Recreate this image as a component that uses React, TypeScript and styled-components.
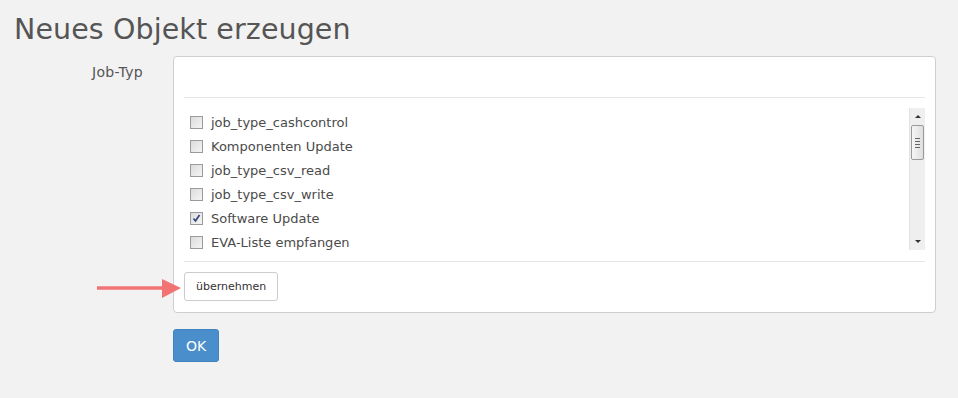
import React from 'react';
import styled, { createGlobalStyle } from 'styled-components';

const GlobalStyle = createGlobalStyle`
  html, body {
    margin: 0;
    padding: 0;
    background: #f2f2f2;
    font-family: "DejaVu Sans", Verdana, sans-serif;
    color: #555;
  }
`;

const Page = styled.div`
  position: relative;
  width: 958px;
  height: 398px;
  padding: 13px 0 0 14px;
  box-sizing: border-box;
  overflow: hidden;
`;

const Title = styled.h1`
  margin: 0 0 9px;
  font-size: 28.5px;
  font-weight: normal;
  line-height: 34px;
  color: #555;
  letter-spacing: 0.1px;
`;

const FormRow = styled.div`
  display: grid;
  grid-template-columns: 159px 763px;
  align-items: start;
`;

const Label = styled.label`
  display: block;
  text-align: right;
  padding: 8px 30px 0 0;
  font-size: 14px;
  letter-spacing: 0.3px;
  color: #555;
`;

const Panel = styled.div`
  width: 763px;
  height: 257px;
  box-sizing: border-box;
  background: #fff;
  border: 1px solid #cfcfcf;
  border-radius: 4px;
  display: flex;
  flex-direction: column;
  padding: 0 10px;
`;

const SearchArea = styled.div`
  height: 40px;
  border-bottom: 1px solid #e6e6e6;
`;

const ListWrap = styled.div`
  display: flex;
  margin-top: 10px;
  height: 142px;
  border-bottom: 1px solid #e6e6e6;
  padding-bottom: 11px;
`;

const List = styled.div`
  flex: 1;
  overflow: hidden;
  padding-top: 2px;
`;

const Row = styled.div`
  display: flex;
  align-items: center;
  height: 24px;
  padding-left: 6px;
  font-size: 13px;
  color: #4a4a4a;
`;

const Box = styled.span`
  width: 11px;
  height: 11px;
  border: 1px solid #9a9a9a;
  background: linear-gradient(135deg, #dcdcdc 0%, #f4f4f4 100%);
  margin-right: 8px;
  display: inline-flex;
  align-items: center;
  justify-content: center;
`;

const Scrollbar = styled.div`
  width: 15px;
  height: 142px;
  background: #efefef;
  border-left: 1px solid #e2e2e2;
  display: flex;
  flex-direction: column;
  align-items: center;
`;

const Arrowhead = styled.div<{ up?: boolean }>`
  height: 17px;
  width: 100%;
  display: flex;
  align-items: center;
  justify-content: center;
  &:after {
    content: '';
    border-left: 3px solid transparent;
    border-right: 3px solid transparent;
    ${({ up }) => (up ? 'border-bottom: 3px solid #333;' : 'border-top: 3px solid #333;')}
  }
`;

const Spacer = styled.div`
  flex: 1;
`;

const Thumb = styled.div`
  width: 11px;
  height: 33px;
  border: 1px solid #9b9b9b;
  border-radius: 2px;
  background: linear-gradient(90deg, #f6f6f6, #dedede);
  display: flex;
  flex-direction: column;
  align-items: center;
  justify-content: center;
  gap: 2px;
`;

const Grip = styled.span`
  width: 5px;
  height: 1px;
  background: #666;
`;

const Footer = styled.div`
  padding-top: 10px;
`;

const Button = styled.button`
  height: 29px;
  padding: 0 11px;
  background: #fff;
  border: 1px solid #ccc;
  border-radius: 3px;
  font-family: inherit;
  font-size: 11px;
  color: #333;
`;

const Primary = styled.button`
  margin: 16px 0 0 159px;
  width: 46px;
  height: 33px;
  background: #4a8ecb;
  border: 1px solid #3f83bf;
  border-radius: 3px;
  color: #fff;
  font-family: inherit;
  font-size: 14px;
`;

const Arrow = styled.svg`
  position: absolute;
  left: 96px;
  top: 278px;
`;

const items: [string, boolean][] = [
  ['job_type_cashcontrol', false],
  ['Komponenten Update', false],
  ['job_type_csv_read', false],
  ['job_type_csv_write', false],
  ['Software Update', true],
  ['EVA-Liste empfangen', false],
];

export default function App() {
  return (
    <Page>
      <GlobalStyle />
      <Title>Neues Objekt erzeugen</Title>
      <FormRow>
        <Label>Job-Typ</Label>
        <Panel>
          <SearchArea />
          <ListWrap>
            <List>
              {items.map(([name, checked]) => (
                <Row key={name}>
                  <Box>
                    {checked && (
                      <svg width="9" height="9" viewBox="0 0 9 9">
                        <path d="M1.5 4.5 L3.5 7 L7.5 1" stroke="#2c3f78" strokeWidth="1.6" fill="none" />
                      </svg>
                    )}
                  </Box>
                  {name}
                </Row>
              ))}
            </List>
            <Scrollbar>
              <Arrowhead up />
              <Thumb>
                <Grip />
                <Grip />
                <Grip />
                <Grip />
              </Thumb>
              <Spacer />
              <Arrowhead />
            </Scrollbar>
          </ListWrap>
          <Footer>
            <Button>übernehmen</Button>
          </Footer>
        </Panel>
      </FormRow>
      <Primary>OK</Primary>
      <Arrow width="86" height="22" viewBox="0 0 86 22">
        <line x1="1" y1="10" x2="70" y2="10" stroke="#f27373" strokeWidth="3.5" />
        <polygon points="66,1 85,10 66,20" fill="#f27373" />
      </Arrow>
    </Page>
  );
}
